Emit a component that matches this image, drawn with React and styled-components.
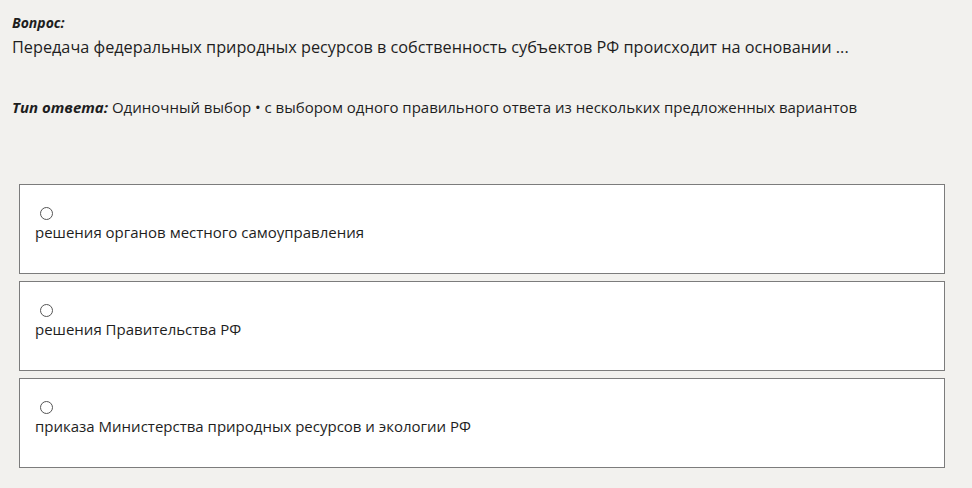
import React from "react";
import styled, { createGlobalStyle } from "styled-components";

const Global = createGlobalStyle`
  html, body {
    margin: 0;
    background: #f2f1ee;
    font-family: "Open Sans", "Noto Sans", sans-serif;
    color: #1e1e1e;
  }
`;

const Page = styled.div`
  padding: 13px 27px 20px 12px;
`;

const Label = styled.div`
  font-size: 14px;
  font-weight: 700;
  font-style: italic;
  line-height: 20px;
`;

const Question = styled.div`
  font-size: 16.25px;
  line-height: 24px;
  margin-top: 2px;
`;

const TypeLine = styled.div`
  margin-top: 37px;
  font-size: 15px;
  line-height: 22px;
  b {
    font-style: italic;
  }
`;

const Options = styled.div`
  margin: 66px 0 0 7px;
  display: flex;
  flex-direction: column;
  gap: 7px;
`;

const Option = styled.label`
  display: flex;
  flex-direction: column;
  align-items: flex-start;
  gap: 2px;
  height: 90px;
  box-sizing: border-box;
  padding: 20px 15px;
  background: #fff;
  border: 1px solid #7c7c7c;
  font-size: 15px;
  line-height: 20px;
`;

const Radio = styled.span`
  width: 11px;
  height: 11px;
  border: 1px solid #555;
  border-radius: 50%;
  margin: 2px 0 0 5px;
`;

const answers = [
  "решения органов местного самоуправления",
  "решения Правительства РФ",
  "приказа Министерства природных ресурсов и экологии РФ",
];

export default function App() {
  return (
    <>
      <Global />
      <Page>
        <Label>Вопрос:</Label>
        <Question>
          Передача федеральных природных ресурсов в собственность субъектов РФ происходит на основании ...
        </Question>
        <TypeLine>
          <b>Тип ответа:</b> Одиночный выбор • с выбором одного правильного ответа из нескольких предложенных вариантов
        </TypeLine>
        <Options>
          {answers.map((a) => (
            <Option key={a}>
              <Radio />
              {a}
            </Option>
          ))}
        </Options>
      </Page>
    </>
  );
}
